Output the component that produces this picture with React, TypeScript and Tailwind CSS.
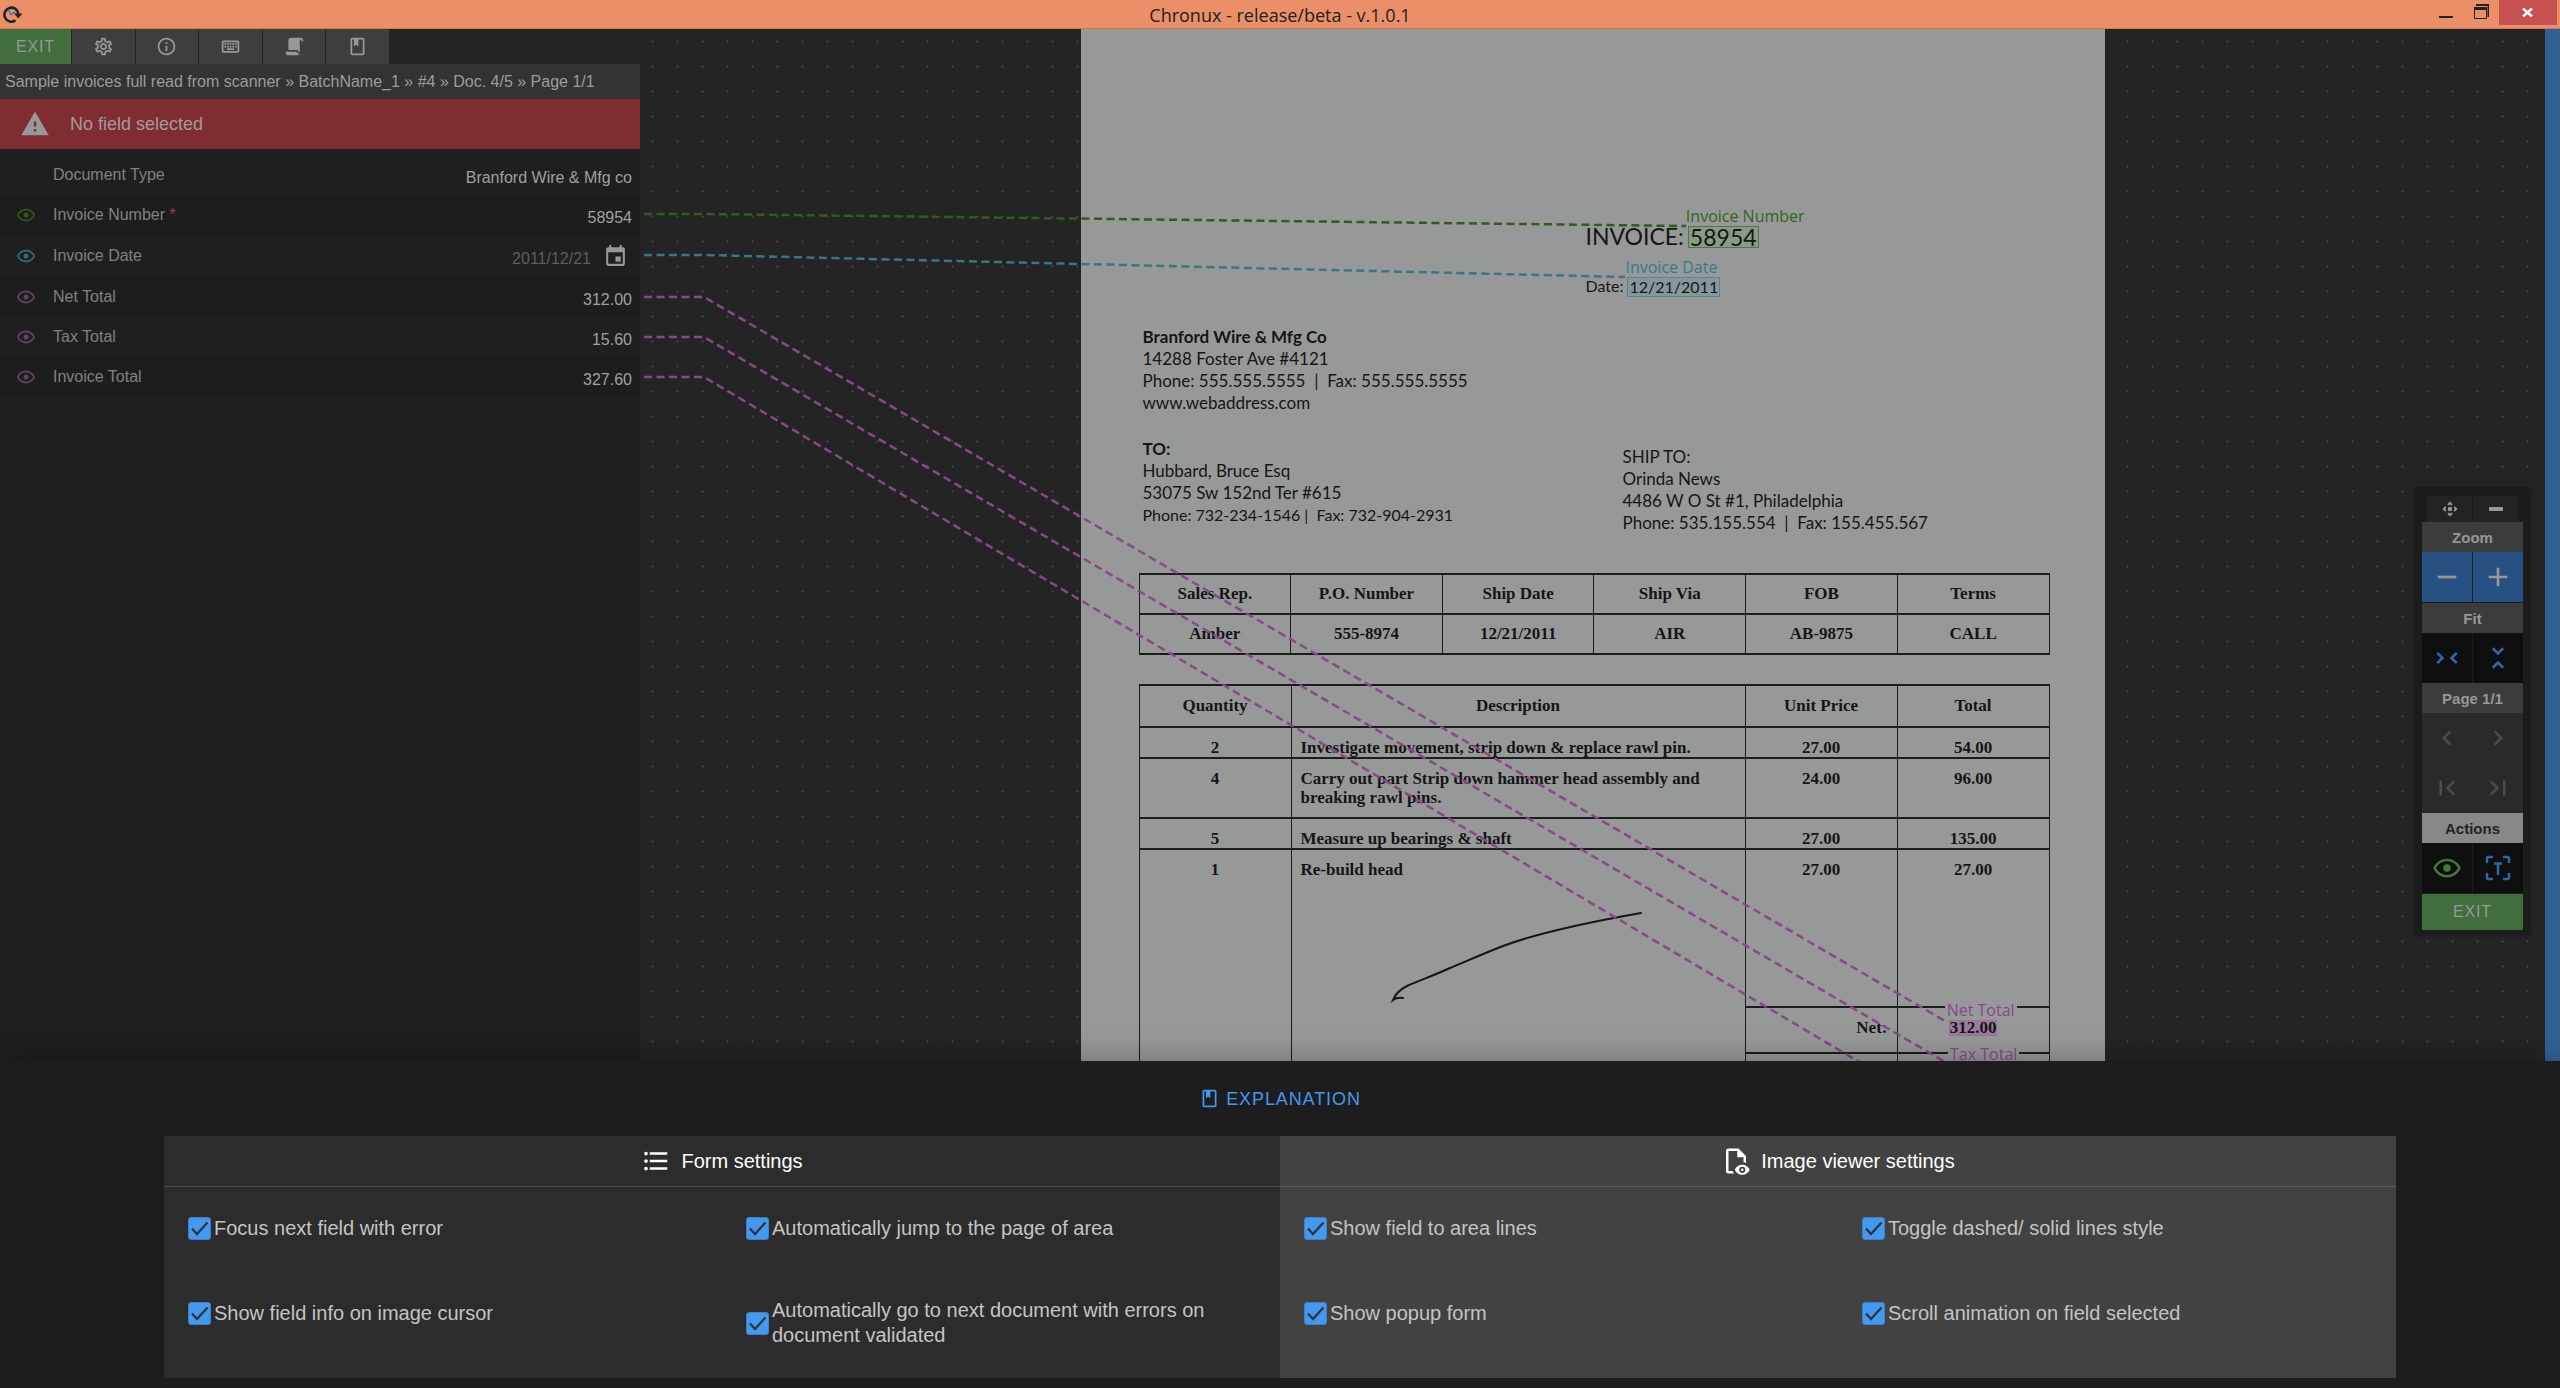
import { useState } from "react";
import type { ReactNode } from "react";
import {
  MdAdd,
  MdChevronLeft,
  MdChevronRight,
  MdEvent,
  MdFirstPage,
  MdFormatListBulleted,
  MdInfoOutline,
  MdLastPage,
  MdOutlineControlCamera,
  MdOutlineKeyboard,
  MdOutlineSettings,
  MdRemove,
  MdUnfoldLess,
  MdWarning,
} from "react-icons/md";

const EYE =
  "M12,9A3,3 0 0,1 15,12A3,3 0 0,1 12,15A3,3 0 0,1 9,12A3,3 0 0,1 12,9M12,4.5C17,4.5 21.27,7.61 23,12C21.27,16.39 17,19.5 12,19.5C7,19.5 2.73,16.39 1,12C2.73,7.61 7,4.5 12,4.5M3.18,12C4.83,15.36 8.24,17.5 12,17.5C15.76,17.5 19.17,15.36 20.82,12C19.17,8.64 15.76,6.5 12,6.5C8.24,6.5 4.83,8.64 3.18,12Z";
const SCRIPT =
  "M17.8,20C17.4,21.2 16.3,22 15,22H5C3.3,22 2,20.7 2,19V18H5L14.2,18C14.6,19.2 15.7,20 17,20H17.8M19,2C20.7,2 22,3.3 22,5V6H20V5C20,4.4 19.6,4 19,4C18.4,4 18,4.4 18,5V18H17C16.4,18 16,17.6 16,17V16H5V5C5,3.3 6.3,2 8,2H19Z";
const BOOK =
  "M18,2A2,2 0 0,1 20,4V20A2,2 0 0,1 18,22H6A2,2 0 0,1 4,20V4A2,2 0 0,1 6,2H18M18,4H13V12L10.5,9.75L8,12V4H6V20H18V4Z";
const FILE_EYE =
  "M17,18C17.56,18 18,18.44 18,19C18,19.56 17.56,20 17,20C16.44,20 16,19.56 16,19C16,18.44 16.44,18 17,18M17,15C14.27,15 11.94,16.66 11,19C11.94,21.34 14.27,23 17,23C19.73,23 22.06,21.34 23,19C22.06,16.66 19.73,15 17,15M17,21.5A2.5,2.5 0 0,1 14.5,19A2.5,2.5 0 0,1 17,16.5A2.5,2.5 0 0,1 19.5,19A2.5,2.5 0 0,1 17,21.5M9.27,20H6V4H13V9H18V13.07C18.7,13.15 19.36,13.32 20,13.56V8L14,2H6A2,2 0 0,0 4,4V20A2,2 0 0,0 6,22H10.5C10,21.41 9.59,20.73 9.27,20ZM13,3V9H19Z";

function Icon({ d, className }: { d: string; className: string }) {
  return (
    <svg viewBox="0 0 24 24" fill="currentColor" className={className} aria-hidden="true">
      <path d={d} />
    </svg>
  );
}

function TitleBar() {
  return (
    <header className="grid h-[29px] shrink-0 grid-cols-3 items-start border-b border-[#c97c5b] bg-[#ea8f68] text-[#222]">
      <svg viewBox="0 0 20 18" className="mt-[5px] ml-[3px] h-[18px] w-5" fill="none" aria-hidden="true">
        <path d="M12.5 15.4A7 7 0 1 1 15.4 9" stroke="#222" strokeWidth="2.6" />
        <path d="M11 8.5h8.400l-4.200 5z" fill="#222" />
        <path d="M5.5 4.5l2.500 5 4-2.500" stroke="#2f7fd0" strokeWidth="1.6" />
      </svg>
      <h1 className="text-center font-['Open_Sans',sans-serif] text-lg leading-[30px]">Chronux - release/beta - v.1.0.1</h1>
      <div className="flex h-[25px] justify-end pr-[3px]">
        <button aria-label="Minimize" className="flex w-[35px] items-end justify-center pb-[7px]">
          <span className="h-0.5 w-3.5 bg-[#222]" />
        </button>
        <button aria-label="Restore" className="flex w-[35px] items-start justify-center pt-1">
          <svg viewBox="0 0 15 15" className="size-[15px]" fill="none" stroke="#222">
            <path d="M2 1h12M14.5 0v13" strokeWidth="2" />
            <path d="M.5 3v11.500h12V3" strokeWidth="1" />
            <path d="M0 4.500h13" strokeWidth="3" />
          </svg>
        </button>
        <button aria-label="Close" className="flex w-[58px] items-center justify-center bg-[#c75050]">
          <svg viewBox="0 0 11 9" className="h-[9px] w-[11px]" stroke="#fff" strokeWidth="2.4">
            <path d="M1 .5l9 8M10 .5l-9 8" />
          </svg>
        </button>
      </div>
    </header>
  );
}

const toolbar: { label: string; icon: ReactNode }[] = [
  { label: "Settings", icon: <MdOutlineSettings className="size-[21px]" /> },
  { label: "Information", icon: <MdInfoOutline className="size-[21px]" /> },
  { label: "Keyboard shortcuts", icon: <MdOutlineKeyboard className="size-[21px]" /> },
  { label: "Script", icon: <Icon d={SCRIPT} className="size-[21px]" /> },
  { label: "Explanation", icon: <Icon d={BOOK} className="size-[21px]" /> },
];

const fields = [
  { id: "invoice-number", label: "Invoice Number", value: "58954", eye: "text-[#285a1e]", row: "h-10 bg-[#1d1d1d]", required: true },
  { id: "invoice-date", label: "Invoice Date", value: "2011/12/21", eye: "text-[#2e6d7a]", row: "h-[42px]", date: true },
  { id: "net-total", label: "Net Total", value: "312.00", eye: "text-[#683f6a]", row: "h-10 bg-[#1d1d1d]" },
  { id: "tax-total", label: "Tax Total", value: "15.60", eye: "text-[#683f6a]", row: "h-10" },
  { id: "invoice-total", label: "Invoice Total", value: "327.60", eye: "text-[#683f6a]", row: "h-10 bg-[#1d1d1d]" },
];

function FormPanel() {
  return (
    <aside className="flex w-1/4 shrink-0 flex-col bg-[#1f1f1f] text-base text-[#818181]">
      <div className="flex h-[35px] gap-px bg-[#242424] text-[#979998]">
        <button className="w-[71px] bg-[#416e3c] tracking-wider">EXIT</button>
        <div className="flex w-[317px] gap-px">
          {toolbar.map((t) => (
            <button key={t.label} aria-label={t.label} className="flex flex-1 items-center justify-center bg-[#3e3e3e]">
              {t.icon}
            </button>
          ))}
        </div>
      </div>
      <nav className="flex h-[35px] items-center bg-[#333] px-[5px] text-[#9c9c9c]">
        Sample invoices full read from scanner » BatchName_1 » #4 » Doc. 4/5 » Page 1/1
      </nav>
      <div className="flex h-[50px] items-center gap-5 bg-[#802c33] px-5 text-lg text-[#a39a9b]">
        <MdWarning className="size-[30px] text-[#979998]" />
        No field selected
      </div>
      <div className="mt-1.5 flex h-10 items-center pr-2 pl-[53px]">
        <label htmlFor="doc-type">Document Type</label>
        <input id="doc-type" defaultValue="Branford Wire & Mfg co" className="ml-auto w-80 pt-1.5 text-right text-[#a0a0a0] outline-none" />
      </div>
      {fields.map((f) => (
        <div key={f.id} className={`flex items-center rounded pr-2 pl-4 ${f.row}`}>
          <button aria-label={`Show ${f.label}`} className={`w-[37px] ${f.eye}`}>
            <Icon d={EYE} className="size-5" />
          </button>
          <label htmlFor={f.id}>
            {f.label}
            {f.required && <span className="text-[#a03a3a]"> *</span>}
          </label>
          <input
            id={f.id}
            defaultValue={f.value}
            className={`ml-auto w-60 pt-1.5 text-right outline-none ${f.date ? "text-[#5e5e5e]" : "text-[#a0a0a0]"}`}
          />
          {f.date && (
            <button aria-label="Pick a date" className="mr-1 ml-3 text-[#979998]">
              <MdEvent className="size-[25px]" />
            </button>
          )}
        </div>
      ))}
    </aside>
  );
}

function Area({ label, value, tone, box }: { label: string; value?: string; tone: string; box: string }) {
  return (
    <span className={`relative inline-block border ${box}`}>
      {value}
      <span className={`absolute bottom-full -left-[5px] mb-0.5 bg-[#979998] px-0.5 font-['Open_Sans',sans-serif] text-base leading-[18px] font-medium whitespace-nowrap ${tone}`}>
        {label}
      </span>
    </span>
  );
}

const orderHead = ["Sales Rep.", "P.O. Number", "Ship Date", "Ship Via", "FOB", "Terms"];
const orderRow = ["Amber", "555-8974", "12/21/2011", "AIR", "AB-9875", "CALL"];
const items = [
  { qty: "2", text: "Investigate movement, strip down & replace rawl pin.", price: "27.00", total: "54.00", h: "h-[30px]" },
  { qty: "4", text: "Carry out part Strip down hammer head assembly and breaking rawl pins.", price: "24.00", total: "96.00", h: "h-[60px]" },
  { qty: "5", text: "Measure up bearings & shaft", price: "27.00", total: "135.00", h: "h-[31px]" },
];
const cell = "border-x border-y-2 border-[#1c1c1c] p-0";
const top = "border-x border-y-2 border-[#1c1c1c] p-0 pt-2.5 align-top leading-[19px]";

function Invoice() {
  return (
    <article className="mx-auto h-full w-[1024px] overflow-hidden bg-[#979998] font-['Lato',sans-serif] text-[17px] leading-[22px] text-[#151515]">
      <div className="mt-[197px] ml-[505px] flex gap-1 text-[23px] leading-5">
        <span>INVOICE:</span>
        <Area label="Invoice Number" value="58954" tone="text-[#32651f]" box="border-[#4a7a40] bg-[#8a9a88] px-px" />
      </div>
      <div className="mt-[29px] ml-[505px] flex gap-1 text-base leading-[18px]">
        <span>Date:</span>
        <Area label="Invoice Date" value="12/21/2011" tone="text-[#357c8b]" box="border-[#4a8a98] bg-[#87979b] px-px" />
      </div>
      <div className="mt-[29px] ml-[62px]">
        <p className="font-bold">Branford Wire &amp; Mfg Co</p>
        <p>14288 Foster Ave #4121</p>
        <p className="whitespace-pre">Phone: 555.555.5555  |  Fax: 555.555.5555</p>
        <p>www.webaddress.com</p>
      </div>
      <div className="mt-6 ml-[62px] flex">
        <div className="w-[480px]">
          <p className="font-bold">TO:</p>
          <p>Hubbard, Bruce Esq</p>
          <p>53075 Sw 152nd Ter #615</p>
          <p className="text-base leading-[22px] whitespace-pre">Phone: 732-234-1546 |  Fax: 732-904-2931</p>
        </div>
        <div className="mt-2">
          <p>SHIP TO:</p>
          <p>Orinda News</p>
          <p>4486 W O St #1, Philadelphia</p>
          <p className="whitespace-pre">Phone: 535.155.554  |  Fax: 155.455.567</p>
        </div>
      </div>
      <table className="mt-[39px] ml-[58px] w-[911px] table-fixed border-collapse text-center font-['Liberation_Serif',serif] font-bold">
        <thead>
          <tr className="h-10">
            {orderHead.map((h) => (
              <th key={h} className={cell}>{h}</th>
            ))}
          </tr>
        </thead>
        <tbody>
          <tr className="h-10">
            {orderRow.map((h) => (
              <td key={h} className={cell}>{h}</td>
            ))}
          </tr>
        </tbody>
      </table>
      <table className="mt-[29px] ml-[58px] w-[911px] table-fixed border-collapse text-center font-['Liberation_Serif',serif] font-bold">
        <colgroup>
          <col className="w-[152px]" />
          <col />
          <col className="w-[152px]" />
          <col className="w-[152px]" />
        </colgroup>
        <thead>
          <tr className="h-[42px]">
            <th className={cell}>Quantity</th>
            <th className={cell}>Description</th>
            <th className={cell}>Unit Price</th>
            <th className={cell}>Total</th>
          </tr>
        </thead>
        <tbody>
          {items.map((i) => (
            <tr key={i.qty} className={i.h}>
              <td className={top}>{i.qty}</td>
              <td className={top}><p className="pr-10 pl-[9px] text-left">{i.text}</p></td>
              <td className={top}>{i.price}</td>
              <td className={top}>{i.total}</td>
            </tr>
          ))}
          <tr className="h-[158px]">
            <td rowSpan={3} className={top}>1</td>
            <td rowSpan={3} className={top}>
              <p className="pl-[9px] text-left">Re-build head</p>
              <svg viewBox="0 0 260 95" className="mt-[30px] ml-[98px] h-[95px] w-[260px]" fill="none" stroke="#151515" strokeWidth="2" strokeLinecap="round">
                <path d="M251 4C200 13 150 23 113 37C90 46 70 55 60 59C45 66 28 72 17 77C9 81 5 86 3 91q4-3 10-2" />
              </svg>
            </td>
            <td className={top}>27.00</td>
            <td className={top}>27.00</td>
          </tr>
          <tr className="h-[46px]">
            <td className={top}><p className="pr-[9px] text-right">Net:</p></td>
            <td className={top}>
              <Area label="Net Total" value="312.00" tone="text-[#8b4690]" box="border-[#9a719c] bg-[#9a7d9c] leading-[14px]" />
            </td>
          </tr>
          <tr className="h-[46px]">
            <td className={top} />
            <td className={top}>
              <Area label="Tax Total" tone="text-[#8b4690]" box="h-4 w-[42px] border-[#9a719c] bg-[#9a7d9c]" />
            </td>
          </tr>
        </tbody>
      </table>
    </article>
  );
}

function Grid() {
  return (
    <svg className="absolute inset-0 h-full w-full" aria-hidden="true">
      <defs>
        <pattern id="grid" width="25" height="25" patternUnits="userSpaceOnUse">
          <path d="M11 12h3v1h-3zM12 11h1v3h-1z" fill="#3c3e41" />
        </pattern>
      </defs>
      <rect width="100%" height="100%" fill="url(#grid)" />
    </svg>
  );
}

/* Connectors from each form field to its area on the page. */
function Connectors() {
  return (
    <svg className="pointer-events-none absolute inset-0 h-full w-full" fill="none" strokeWidth="2.5" strokeDasharray="8 4.5" aria-hidden="true">
      <path d="M4 185H64L1046 197" stroke="#2f5c20" />
      <path d="M4 226H64L985 248" stroke="#3a7784" />
      <g stroke="#864a8a">
        <path d="M4 268H64L1305 992" />
        <path d="M4 308H64L1312 1037" />
        <path d="M4 348H64L1312 1088" />
      </g>
    </svg>
  );
}

const paletteHead = "flex h-[30px] items-center justify-center bg-[#3c3c3c] font-bold text-[#979797]";
const darkKey = "flex h-[50px] items-center justify-center bg-[#0f0f0f]";

function Palette() {
  return (
    <div className="absolute top-[458px] right-3.5 w-[117px] bg-[#1c1c1c] px-2 pt-[9px] pb-[5px] text-[15px] leading-none shadow">
      <div className="mx-[5px] flex h-[26px] gap-px text-[#979998]">
        <button aria-label="Move" className="flex flex-1 items-center justify-center bg-[#232323]">
          <MdOutlineControlCamera className="size-[18px]" />
        </button>
        <button aria-label="Collapse" className="flex flex-1 items-center justify-center bg-[#232323]">
          <span className="h-1 w-3.5 bg-current" />
        </button>
      </div>
      <div className={paletteHead}>Zoom</div>
      <div className="mb-px grid grid-cols-2 gap-px text-[#979998]">
        <button aria-label="Zoom out" className="flex h-[50px] items-center justify-center bg-[#275182]">
          <MdRemove className="size-8" />
        </button>
        <button aria-label="Zoom in" className="flex h-[50px] items-center justify-center bg-[#275182]">
          <MdAdd className="size-8" />
        </button>
      </div>
      <div className={paletteHead}>Fit</div>
      <div className="grid grid-cols-2 gap-px text-[#2f68a8]">
        <button aria-label="Fit width" className={darkKey}>
          <MdUnfoldLess className="size-8 rotate-90" />
        </button>
        <button aria-label="Fit height" className={darkKey}>
          <MdUnfoldLess className="size-8" />
        </button>
      </div>
      <div className={paletteHead}>Page 1/1</div>
      <div className="grid grid-cols-2 bg-[#2a2a2a] text-[#4c4c4c]">
        <button aria-label="Previous page" className="flex h-[50px] items-center justify-center"><MdChevronLeft className="size-[30px]" /></button>
        <button aria-label="Next page" className="flex h-[50px] items-center justify-center"><MdChevronRight className="size-[30px]" /></button>
        <button aria-label="First page" className="flex h-[50px] items-center justify-center"><MdFirstPage className="size-[30px]" /></button>
        <button aria-label="Last page" className="flex h-[50px] items-center justify-center"><MdLastPage className="size-[30px]" /></button>
      </div>
      <div className="flex h-[30px] items-center justify-center bg-[#888] font-bold text-[#222]">Actions</div>
      <div className="grid grid-cols-2 gap-px">
        <button aria-label="Show areas" className={darkKey}>
          <Icon d={EYE} className="size-[30px] text-[#43793f]" />
        </button>
        <button aria-label="Recognize text" className={darkKey}>
          <svg viewBox="0 0 30 30" className="size-[30px] text-[#2f68a8]" fill="none" stroke="currentColor" strokeWidth="2.500">
            <path d="M4 10V5.500Q4 4 5.500 4H10M20 4h4.500Q26 4 26 5.500V10M26 20v4.500Q26 26 24.500 26H20M10 26H5.500Q4 26 4 24.500V20M11 10.500h8M15 10.500V22" />
          </svg>
        </button>
      </div>
      <button className="mt-px h-9 w-full bg-[#416e3c] text-base tracking-wider text-[#979998]">EXIT</button>
    </div>
  );
}

function Option({ label }: { label: string }) {
  const [on, setOn] = useState(true);
  return (
    <label className="flex min-h-[30px] items-center gap-[3px] pr-10 pl-6">
      <span className="relative size-[23px] shrink-0">
        <input
          type="checkbox"
          checked={on}
          onChange={() => setOn(!on)}
          className="block size-[23px] appearance-none rounded-[3px] border border-[#3f7fc4] bg-transparent checked:bg-[#4398f0]"
        />
        {on && (
          <svg viewBox="0 0 23 23" className="pointer-events-none absolute inset-0 size-[23px]" fill="none" stroke="#2e3338" strokeWidth="2.200">
            <path d="M4 11.500l5 5.500L19.500 5.500" />
          </svg>
        )}
      </span>
      {label}
    </label>
  );
}

function SettingsCard({ title, icon, options, tone }: { title: string; icon: ReactNode; options: string[]; tone: string }) {
  return (
    <section className={`flex-1 ${tone}`}>
      <h2 className="flex h-[51px] items-center justify-center gap-2.5 border-b border-white/15 text-white">
        {icon}
        {title}
      </h2>
      <div className="grid grid-cols-2 items-start gap-y-[55px] pt-[26px] pb-[30px] text-[#c4c4c4]">
        {options.map((o) => (
          <Option key={o} label={o} />
        ))}
      </div>
    </section>
  );
}

export default function App() {
  return (
    <div className="flex h-screen flex-col overflow-hidden bg-[#242424] font-['Liberation_Sans',Arial,sans-serif]">
      <TitleBar />
      <main className="flex min-h-0 flex-1">
        <FormPanel />
        <div className="relative min-w-0 flex-1 overflow-hidden">
          <Grid />
          <div className="relative h-full"><Invoice /></div>
          <Connectors />
          <Palette />
        </div>
        <div className="w-[15px] bg-[#306194]" />
      </main>
      <footer className="relative shrink-0 bg-[#1d1d1d] px-[164px] pb-2.5 text-xl leading-[25px] shadow-[0_0_30px_rgba(0,0,0,0.3)]">
        <div className="flex h-[75px] items-center justify-center">
          <button className="flex items-center gap-1.5 text-lg tracking-wider text-[#4398f0]">
            <Icon d={BOOK} className="size-[21px]" />
            EXPLANATION
          </button>
        </div>
        <div className="flex">
          <SettingsCard
            title="Form settings"
            tone="bg-[#2c2c2c]"
            icon={<MdFormatListBulleted className="size-[30px]" />}
            options={[
              "Focus next field with error",
              "Automatically jump to the page of area",
              "Show field info on image cursor",
              "Automatically go to next document with errors on document validated",
            ]}
          />
          <SettingsCard
            title="Image viewer settings"
            tone="bg-[#424242]"
            icon={<Icon d={FILE_EYE} className="size-[30px]" />}
            options={[
              "Show field to area lines",
              "Toggle dashed/ solid lines style",
              "Show popup form",
              "Scroll animation on field selected",
            ]}
          />
        </div>
      </footer>
    </div>
  );
}
